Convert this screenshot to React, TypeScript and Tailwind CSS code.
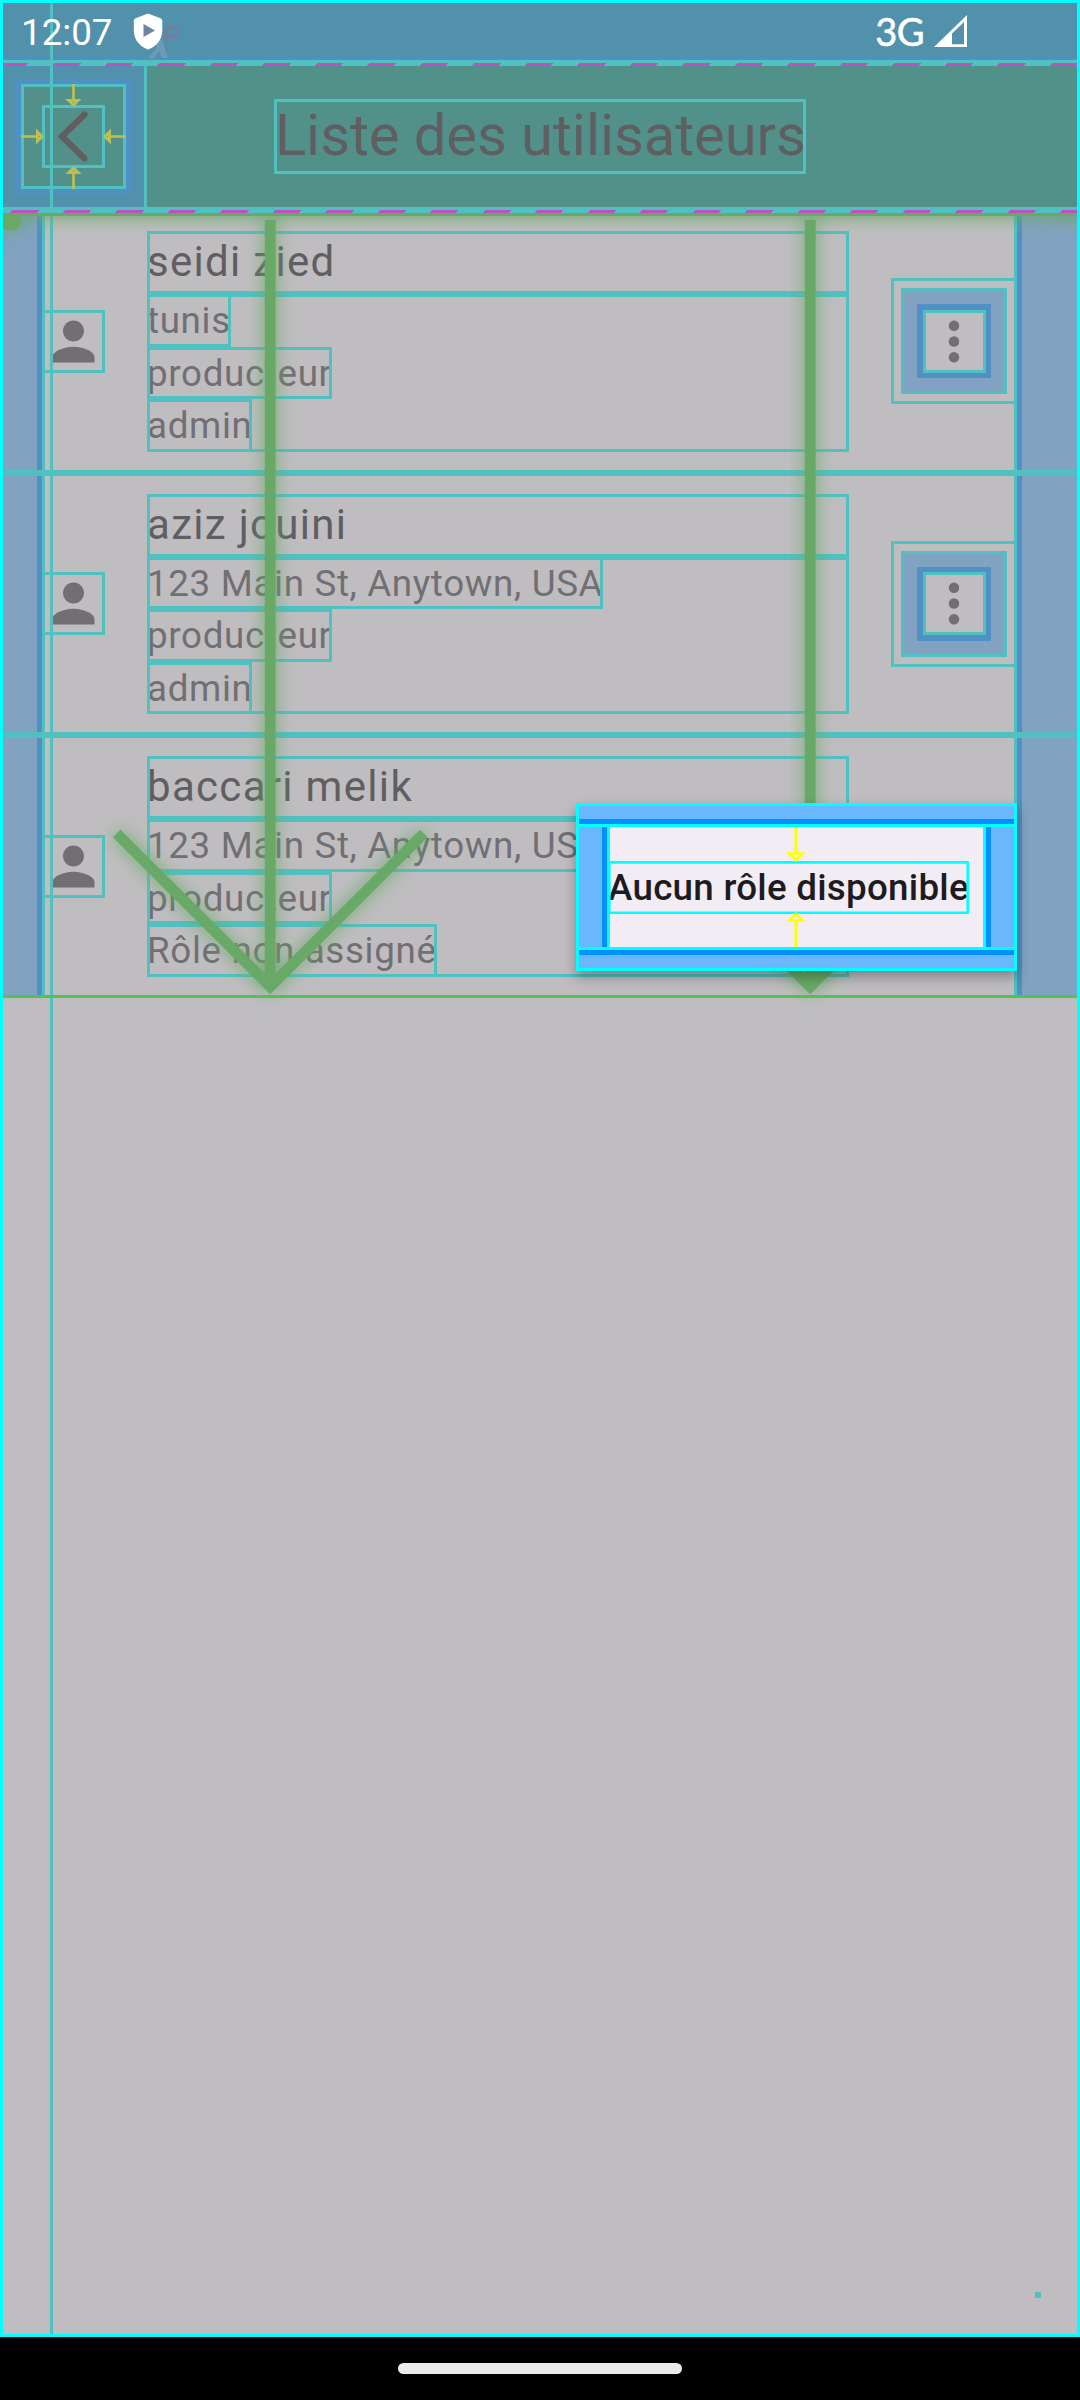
import type { ReactNode } from "react";

type User = { name: string; lines: string[] };

const users: User[] = [
  { name: "seidi zied", lines: ["tunis", "producteur", "admin"] },
  { name: "aziz jouini", lines: ["123 Main St, Anytown, USA", "producteur", "admin"] },
  { name: "baccari melik", lines: ["123 Main St, Anytown, USA", "producteur", "Rôle non assigné"] },
];

/** Box with a debug outline painted over its content. */
function Guide({ className = "", children }: { className?: string; children?: ReactNode }) {
  return (
    <div className={`relative ${className}`}>
      {children}
      <div className="pointer-events-none absolute inset-0 shadow-[inset_0_0_0_3px_#50c0c0]" />
    </div>
  );
}

function StatusBar() {
  return (
    <div className="relative flex h-[60px] items-center border-b-2 border-[#5090c4] bg-[#5191ab] pl-[21px] text-white">
      <svg className="absolute left-[144px] top-[20px] h-[46px] w-[40px]" viewBox="144 20 40 46">
        <circle cx="171" cy="32" r="5.6" fill="none" stroke="#787c9c" strokeWidth="3" />
        <path d="M163 38l6 2" stroke="#787c9c" strokeWidth="3" />
        <path d="M154 40l3 8-9 10h6l5-7 3 7h6l-6-18z" fill="#6c9abb" />
      </svg>
      <span className="relative z-30 mt-[9px] text-[36.75px] leading-none">12:07</span>
      <svg className="relative z-10 ml-[20px] mt-[5px] h-[37px] w-[30px]" viewBox="0 0 30 37">
        <path
          d="M15 .5 2.7 5.2Q.8 6 .8 8V17C.8 27 7 34 15 36.5 23 34 29.300 27 29.300 17V8q0-2-1.900-2.800z"
          fill="#fff"
        />
        <path d="M10.500 11v13L22 17.500z" fill="#6f84a3" />
      </svg>
      <span className="ml-auto mt-[4px] font-['Lato'] text-[38px] leading-none tracking-[-0.5px] [-webkit-text-stroke:0.6px_white]">
        3G
      </span>
      <svg className="ml-[10px] mr-[113px] mt-[4px] h-[33px] w-[33px]" viewBox="0 0 33 33">
        <path fillRule="evenodd" fill="#fff" d="M33 0V32H0zM18 18.500V29.300H30V7z" />
      </svg>
    </div>
  );
}

const arrowDirections = ["rotate-0", "rotate-90", "rotate-180", "-rotate-90"];

function BackButton() {
  return (
    <div className="relative flex h-full w-[147px] items-center justify-center bg-[#5191ab]">
      <div className="flex size-[115px] items-center justify-center bg-[#5090c4]">
        <Guide className="flex size-[105px] items-center justify-center bg-[#52918a]">
          <Guide className="size-[63px]">
            <svg className="size-full" viewBox="0 0 63 63" fill="none">
              <path d="M42.500 9.500 20 31.500l22.500 22" stroke="#5f5e61" strokeWidth="6.200" strokeLinecap="round" />
            </svg>
          </Guide>
          {arrowDirections.map((turn) => (
            <svg key={turn} className={`absolute inset-0 z-10 size-full ${turn}`} viewBox="0 0 105 105" fill="none">
              <path d="M52.500 0V16" stroke="#bfbf50" strokeWidth="2.700" />
              <path d="M48 16.500h9l-4.500 4.500z" fill="#52918a" stroke="#bfbf50" strokeWidth="3" />
            </svg>
          ))}
        </Guide>
      </div>
      <div className="absolute inset-y-0 right-0 w-[3px] bg-[#50c0c0]" />
    </div>
  );
}

function AppBar() {
  return (
    <div className="relative h-[153px] border-y-[6px] border-[#50c0c0] bg-[#52918a]">
      <div className="flex h-full items-center">
        <BackButton />
        <Guide className="ml-[127px] h-[75px] w-[532px] pl-px">
          <span className="block whitespace-nowrap text-[57.75px] leading-[72px] text-[#5f5e61]">
            Liste des utilisateurs
          </span>
        </Guide>
      </div>
      <div className="absolute inset-x-0 -top-[3px] h-[3px] bg-[repeating-linear-gradient(135deg,#50c0c0_0_1.6px,#bf50bf_1.6px_20.3px,#50c0c0_20.3px_37.12px)]" />
      <div className="absolute inset-x-0 -bottom-[6px] h-[3px] bg-[repeating-linear-gradient(135deg,#50c0c0_0_9px,#bf50bf_9px_27.6px,#50c0c0_27.6px_37.12px)]" />
    </div>
  );
}

function MenuButton() {
  return (
    <Guide className="flex size-[126px] items-center justify-center">
      <Guide className="flex size-[106px] items-center justify-center bg-[#81a2c0]">
        <div className="flex size-[74px] items-center justify-center bg-[#5090c4]">
          <Guide className="size-[63px] bg-[#bfbdc0]">
            <svg className="size-full" viewBox="0.200 0 24 24" fill="#716f74">
              <circle cx="12" cy="6" r="2" />
              <circle cx="12" cy="12" r="2" />
              <circle cx="12" cy="18" r="2" />
            </svg>
          </Guide>
        </div>
      </Guide>
    </Guide>
  );
}

function UserTile({ user }: { user: User }) {
  return (
    <Guide className="h-[262.5px]">
      <div className="flex h-full">
        <div className="w-[42px] border-r-[5px] border-[#5090c4] bg-[#81a2c0]" />
        <div className="relative flex flex-1 items-center">
          <Guide className="size-[63px]">
            <svg className="size-full" viewBox="0 0 24 24" fill="#716f74">
              <path d="M12 12c2.210 0 4-1.790 4-4s-1.790-4-4-4-4 1.790-4 4 1.790 4 4 4zm0 2c-2.670 0-8 1.340-8 4v2h16v-2c0-2.660-5.330-4-8-4z" />
            </svg>
          </Guide>
          <div className="ml-[42px] w-[702px]">
            <Guide className="h-[63px]">
              <span className="block text-[42px] leading-[62px] tracking-[1.3125px] text-[#5f5e61]">{user.name}</span>
            </Guide>
            <Guide className="h-[157.5px]">
              {user.lines.map((line) => (
                <Guide key={line} className="h-[52.5px] w-fit">
                  <span className="block whitespace-nowrap text-[36.75px] leading-[54.5px] tracking-[0.656px] text-[#716f74]">
                    {line}
                  </span>
                </Guide>
              ))}
            </Guide>
          </div>
          <div className="ml-auto">
            <MenuButton />
          </div>
          <div className="absolute inset-y-0 left-0 w-[2.6px] bg-[#50c0c0]" />
          <div className="absolute inset-y-0 right-0 w-[2.6px] bg-[#50c0c0]" />
        </div>
        <div className="w-[63px] border-l-[5px] border-[#5090c4] bg-[#81a2c0]" />
      </div>
    </Guide>
  );
}

function ScrollArrows() {
  const arrows = (
    <g fill="none" stroke="#68a967" strokeWidth="10.800">
      <path d="M270.200 7V771M116.700 620.500 270.200 773.600 423.700 620.500" />
      <path d="M810.200 7V771M656.700 620.500 810.200 773.600 963.700 620.500" />
    </g>
  );
  return (
    <svg className="pointer-events-none absolute left-0 top-[213px] z-20 h-[840px] w-[1080px]" viewBox="0 0 1080 840">
      <defs>
        <filter id="glow" filterUnits="userSpaceOnUse" x="-60" y="-60" width="1200" height="940">
          <feGaussianBlur stdDeviation="9" />
        </filter>
      </defs>
      <g filter="url(#glow)">
        <rect x="-40" y="-22" width="1160" height="26" fill="#68a967" />
        <circle cx="10.500" cy="7.500" r="10.500" fill="#68a967" />
        <circle cx="1066" cy="-8" r="15" fill="#68a967" />
        {arrows}
      </g>
      <rect width="1080" height="3" fill="#68a967" />
      <circle cx="10.500" cy="7.500" r="10.500" fill="#68a967" />
      {arrows}
      <rect y="782" width="1080" height="3" fill="#52c152" />
    </svg>
  );
}

function RolePopup() {
  return (
    <div className="absolute left-[576px] top-[803px] z-30 flex h-[168px] w-[441px] flex-col border-[3px] border-[#00ffff] bg-[#f2edf4] shadow-[0_6px_12px_rgba(0,0,0,0.32)]">
      <div className="h-[18px] border-b-[5px] border-[#0090ff] bg-[#6ab7fd]" />
      <div className="relative flex flex-1 border-y-[3px] border-[#00ffff]">
        <div className="w-[28px] border-r-[5px] border-[#0090ff] bg-[#6ab7fd]" />
        <div className="flex flex-1 items-center border-x-[3px] border-[#00ffff]">
          <div className="relative -ml-[2px] h-[53px] w-[361px] shrink-0">
            <span className="block whitespace-nowrap text-[36.75px] font-medium leading-[53px] tracking-[0.2625px] text-[#1d1b20]">
              Aucun rôle disponible
            </span>
            <div className="absolute inset-0 shadow-[inset_0_0_0_2.625px_#00ffff]" />
          </div>
        </div>
        <div className="w-[28px] border-l-[5px] border-[#0090ff] bg-[#6ab7fd]" />
        <svg className="absolute left-[206px] top-0 h-[36px] w-[22px]" viewBox="0 0 22 36" fill="none">
          <path d="M11 0V26" stroke="#ff0" strokeWidth="3" />
          <path d="M4.500 26.500h13L11 33z" stroke="#ff0" strokeWidth="2.700" fill="#f2edf4" />
        </svg>
        <svg className="absolute bottom-0 left-[206px] h-[36px] w-[22px]" viewBox="0 0 22 36" fill="none">
          <path d="M11 36V10" stroke="#ff0" strokeWidth="3" />
          <path d="M4.500 9.500h13L11 3z" stroke="#ff0" strokeWidth="2.700" fill="#f2edf4" />
        </svg>
      </div>
      <div className="h-[18px] border-t-[5px] border-[#0090ff] bg-[#6ab7fd]" />
    </div>
  );
}

export default function App() {
  return (
    <div className="relative flex h-[2400px] w-[1080px] flex-col overflow-hidden bg-black font-['Roboto',sans-serif]">
      <div className="h-[2337px] bg-[#bfbdc0]">
        <StatusBar />
        <AppBar />
        <div className="-mt-[3px] [clip-path:inset(3px_0_0_0)]">
          {users.map((user) => (
            <UserTile key={user.name} user={user} />
          ))}
        </div>
      </div>
      <div className="flex flex-1 items-center justify-center">
        <div className="h-[11px] w-[284px] rounded-full bg-[#ebebeb]" />
      </div>
      <div className="absolute left-[50px] top-0 z-10 h-[2334px] w-[2.6px] bg-[#50c0c0]" />
      <div className="absolute left-[1035px] top-[2292px] size-[6px] bg-[#50c0c0]" />
      <ScrollArrows />
      <RolePopup />
      <div className="pointer-events-none absolute inset-x-0 top-0 z-40 h-[2337px] border-[3px] border-[#00ffff]" />
    </div>
  );
}
